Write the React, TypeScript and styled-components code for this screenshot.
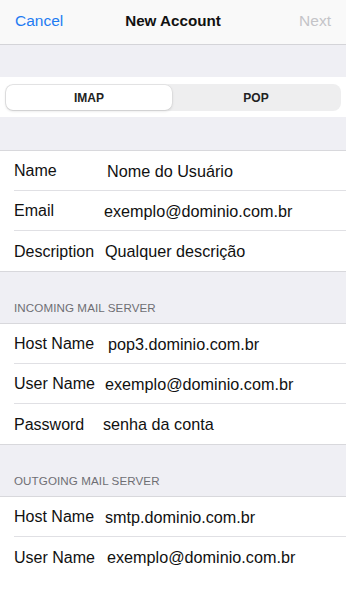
import React from 'react';
import styled, { createGlobalStyle } from 'styled-components';

const GlobalStyle = createGlobalStyle`
  html, body {
    margin: 0;
    padding: 0;
    background: #ffffff;
    font-family: 'Liberation Sans', Arial, sans-serif;
    -webkit-font-smoothing: antialiased;
  }
  * {
    box-sizing: border-box;
  }
`;

interface Field {
  label: string;
  value: string;
  // the values in the screenshot don't line up, keep each one's own offset
  shift: number;
}

interface Section {
  title?: string;
  fields: Field[];
}

const sections: Section[] = [
  {
    fields: [
      { label: 'Name', value: 'Nome do Usuário', shift: 4 },
      { label: 'Email', value: 'exemplo@dominio.com.br', shift: 1 },
      { label: 'Description', value: 'Qualquer descrição', shift: 2 },
    ],
  },
  {
    title: 'INCOMING MAIL SERVER',
    fields: [
      { label: 'Host Name', value: 'pop3.dominio.com.br', shift: 5 },
      { label: 'User Name', value: 'exemplo@dominio.com.br', shift: 2 },
      { label: 'Password', value: 'senha da conta', shift: 0 },
    ],
  },
  {
    title: 'OUTGOING MAIL SERVER',
    fields: [
      { label: 'Host Name', value: 'smtp.dominio.com.br', shift: 2 },
      { label: 'User Name', value: 'exemplo@dominio.com.br', shift: 4 },
    ],
  },
];

const App: React.FC = () => {
  return (
    <Screen>
      <GlobalStyle />
      <NavBar>
        <NavButton>Cancel</NavButton>
        <Title>New Account</Title>
        <NavButton $disabled>Next</NavButton>
      </NavBar>
      <Spacer $height={32} />
      <SegmentBar>
        <Segmented>
          <Segment $active>IMAP</Segment>
          <Segment>POP</Segment>
        </Segmented>
      </SegmentBar>
      {sections.map((section, i) => (
        <React.Fragment key={i}>
          {section.title ? (
            <Header>{section.title}</Header>
          ) : (
            <Spacer $height={33} />
          )}
          <Group $last={i === sections.length - 1}>
            {section.fields.map((field, j) => (
              <Row key={j} $last={j === section.fields.length - 1}>
                <Label>{field.label}</Label>
                <Value $shift={field.shift}>{field.value}</Value>
              </Row>
            ))}
          </Group>
        </React.Fragment>
      ))}
    </Screen>
  );
};
export default App;

const Screen = styled.div`
  width: 346px;
  min-height: 589px;
  background: #efeff4;
  display: flex;
  flex-direction: column;
  overflow: hidden;
`;

const NavBar = styled.header`
  height: 45px;
  padding: 0 15px 3px;
  display: flex;
  align-items: center;
  justify-content: space-between;
  background: #f9f9f9;
  border-bottom: 1px solid #d4d4d8;
`;

const NavButton = styled.span<{ $disabled?: boolean }>`
  font-size: 15.5px;
  color: ${(p) => (p.$disabled ? '#c4c4c8' : '#1f7cf2')};
  width: 50px;
  text-align: ${(p) => (p.$disabled ? 'right' : 'left')};
`;

const Title = styled.h1`
  margin: 0;
  font-size: 15.2px;
  font-weight: 700;
  color: #111111;
`;

const Spacer = styled.div<{ $height: number }>`
  height: ${(p) => p.$height}px;
`;

const SegmentBar = styled.div`
  height: 40px;
  background: #ffffff;
  padding: 7px 5px 6px;
`;

const Segmented = styled.div`
  height: 27px;
  border-radius: 8px;
  background: #eeeeef;
  display: grid;
  grid-template-columns: 166px 1fr;
  padding: 1px;
`;

const Segment = styled.div<{ $active?: boolean }>`
  display: flex;
  align-items: center;
  justify-content: center;
  font-size: 12px;
  font-weight: 700;
  color: #222222;
  border-radius: 7px;
  background: ${(p) => (p.$active ? '#ffffff' : 'transparent')};
  box-shadow: ${(p) =>
    p.$active ? '0 1px 3px rgba(0, 0, 0, 0.14), 0 0 0 0.5px rgba(0, 0, 0, 0.06)' : 'none'};
`;

const Header = styled.div`
  height: 51px;
  display: flex;
  align-items: flex-end;
  padding: 0 14px 9px;
  font-size: 11.6px;
  color: #6e6e73;
  letter-spacing: 0.1px;
`;

const Group = styled.section<{ $last?: boolean }>`
  background: #ffffff;
  border-top: 1px solid #d8d8dc;
  border-bottom: ${(p) => (p.$last ? 'none' : '1px solid #d8d8dc')};
  flex: ${(p) => (p.$last ? '1' : 'none')};
`;

const Row = styled.div<{ $last?: boolean }>`
  height: 40px;
  margin-left: 14px;
  display: grid;
  grid-template-columns: 89px 1fr;
  align-items: center;
  padding-top: 1px;
  border-bottom: ${(p) => (p.$last ? 'none' : '1px solid #e0e0e4')};
`;

const Label = styled.span`
  font-size: 16px;
  color: #111111;
  white-space: nowrap;
`;

const Value = styled.span<{ $shift: number }>`
  padding-left: ${(p) => p.$shift}px;
  font-size: 16.2px;
  color: #111111;
  white-space: nowrap;
`;
